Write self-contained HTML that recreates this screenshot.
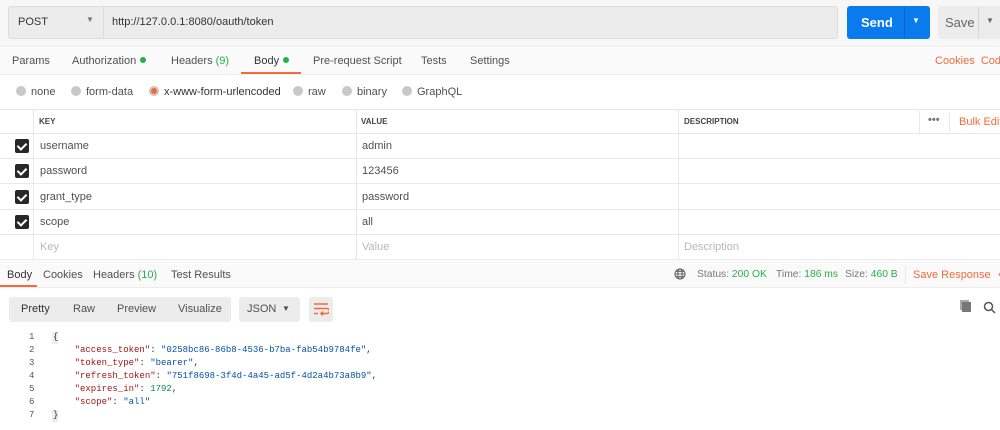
<!DOCTYPE html><html><head><style>
*{box-sizing:border-box;margin:0;padding:0}
body{width:1000px;height:430px;overflow:hidden;background:#fff;font-family:"Liberation Sans",sans-serif;font-size:11px;color:#505050;position:relative}
.a{position:absolute;white-space:nowrap}
.g{color:#26b047}
.o{color:#f26b3a}
.dot{display:inline-block;width:6px;height:6px;border-radius:50%;background:#26b047;margin-left:4px;vertical-align:1px}
.rad{display:inline-block;width:10px;height:10px;border-radius:50%;background:#c8c8c8;vertical-align:-1px;margin-right:5px}
.cb{position:absolute;left:15px;width:14px;height:14px;background:#282828;border-radius:2px}
.cb:after{content:"";position:absolute;left:4px;top:2px;width:4px;height:7px;border:solid #fff;border-width:0 2px 2px 0;transform:rotate(45deg)}
.row{position:absolute;left:0;width:1000px;border-bottom:1px solid #e8e8e8}
.code{font-family:"Liberation Mono",monospace;font-size:9px;line-height:13px;white-space:pre}
.k{color:#a31515}.s{color:#0451a5}.n{color:#098658}
.st{font-size:10.3px;color:#777}
</style></head><body>
<div class="a" style="left:0;top:0;width:1000px;height:47px;background:#f7f7f7;border-bottom:1px solid #ececec"></div>
<div class="a" style="left:8px;top:6px;width:830px;height:33px;background:#ececec;border:1px solid #dcdcdc;border-radius:3px"></div>
<div class="a" style="left:103px;top:7px;width:1px;height:31px;background:#dcdcdc"></div>
<div class="a" style="left:18px;top:16px;font-size:11px;color:#333">POST</div>
<div class="a" style="left:86px;top:15px;font-size:8px;color:#777">▼</div>
<div class="a" style="left:112px;top:16px;color:#333">http://127.0.0.1:8080/oauth/token</div>
<div class="a" style="left:847px;top:6px;width:83px;height:33px;background:#097bed;border-radius:3px"></div>
<div class="a" style="left:904px;top:6px;width:1px;height:33px;background:#0868c9"></div>
<div class="a" style="left:861px;top:15px;color:#fff;font-size:13px;font-weight:bold">Send</div>
<div class="a" style="left:912px;top:16px;color:#fff;font-size:8px">▼</div>
<div class="a" style="left:938px;top:6px;width:70px;height:33px;background:#ececec;border-radius:3px"></div>
<div class="a" style="left:978px;top:6px;width:1px;height:33px;background:#d8d8d8"></div>
<div class="a" style="left:945px;top:15px;color:#666;font-size:13px">Save</div>
<div class="a" style="left:986px;top:16px;color:#666;font-size:8px">▼</div>
<div class="a" style="left:0;top:48px;width:1000px;height:27px;background:#fafafa;border-bottom:1px solid #ececec"></div>
<div class="a" style="top:55px;left:12px">Params</div>
<div class="a" style="top:55px;left:72px">Authorization<span class="dot"></span></div>
<div class="a" style="top:55px;left:171px">Headers <span class="g">(9)</span></div>
<div class="a" style="top:55px;left:254px;color:#333">Body<span class="dot"></span></div>
<div class="a" style="left:241px;top:72px;width:60px;height:2px;background:#f26b3a"></div>
<div class="a" style="top:55px;left:313px">Pre-request Script</div>
<div class="a" style="top:55px;left:421px">Tests</div>
<div class="a" style="top:55px;left:470px">Settings</div>
<div class="a o" style="top:55px;left:935px">Cookies&nbsp;&nbsp;Code</div>
<div class="a" style="top:86px;left:16px"><span class="rad"></span>none</div>
<div class="a" style="top:86px;left:71px"><span class="rad"></span>form-data</div>
<div class="a" style="top:86px;left:149px;color:#333"><span class="rad" style="background:#f26b3a;box-shadow:inset 0 0 0 2px #ccc"></span>x-www-form-urlencoded</div>
<div class="a" style="top:86px;left:293px"><span class="rad"></span>raw</div>
<div class="a" style="top:86px;left:342px"><span class="rad"></span>binary</div>
<div class="a" style="top:86px;left:402px"><span class="rad"></span>GraphQL</div>
<div class="row" style="top:109px;height:1px"></div>
<div class="row" style="top:110px;height:24px"></div>
<div class="row" style="top:134px;height:25px"></div>
<div class="row" style="top:159px;height:25px"></div>
<div class="row" style="top:184px;height:26px"></div>
<div class="row" style="top:210px;height:25px"></div>
<div class="row" style="top:235px;height:25px"></div>
<div class="a" style="left:33px;top:110px;width:1px;height:150px;background:#e8e8e8"></div>
<div class="a" style="left:356px;top:110px;width:1px;height:150px;background:#e8e8e8"></div>
<div class="a" style="left:678px;top:110px;width:1px;height:150px;background:#e8e8e8"></div>
<div class="a" style="left:919px;top:111px;width:1px;height:22px;background:#e8e8e8"></div>
<div class="a" style="left:949px;top:113px;width:1px;height:18px;background:#e8e8e8"></div>
<div class="a" style="top:117px;left:39px;font-size:8px;font-weight:bold;color:#444">KEY</div>
<div class="a" style="top:117px;left:361px;font-size:8px;font-weight:bold;color:#444">VALUE</div>
<div class="a" style="top:117px;left:684px;font-size:8px;font-weight:bold;color:#444">DESCRIPTION</div>
<div class="a" style="top:114px;left:928px;font-weight:bold;color:#777">•••</div>
<div class="a o" style="top:116px;left:959px">Bulk Edit</div>
<div class="cb" style="top:139px"></div><div class="a" style="top:140px;left:40px">username</div><div class="a" style="top:140px;left:362px">admin</div>
<div class="cb" style="top:164px"></div><div class="a" style="top:165px;left:40px">password</div><div class="a" style="top:165px;left:362px">123456</div>
<div class="cb" style="top:190px"></div><div class="a" style="top:191px;left:40px">grant_type</div><div class="a" style="top:191px;left:362px">password</div>
<div class="cb" style="top:215px"></div><div class="a" style="top:216px;left:40px">scope</div><div class="a" style="top:216px;left:362px">all</div>
<div class="a" style="top:241px;left:40px;color:#b8b8b8">Key</div><div class="a" style="top:241px;left:362px;color:#b8b8b8">Value</div><div class="a" style="top:241px;left:684px;color:#b8b8b8">Description</div>
<div class="a" style="left:0;top:261px;width:1000px;height:27px;background:#fafafa;border-bottom:1px solid #ececec"></div>
<div class="a" style="top:269px;left:7px;color:#333">Body</div>
<div class="a" style="left:0;top:285px;width:37px;height:2px;background:#f26b3a"></div>
<div class="a" style="top:269px;left:43px">Cookies</div>
<div class="a" style="top:269px;left:93px">Headers <span class="g">(10)</span></div>
<div class="a" style="top:269px;left:171px">Test Results</div>
<svg class="a" style="left:674px;top:268px" width="12" height="12" viewBox="0 0 12 12" fill="none" stroke="#666" stroke-width="1.1"><circle cx="6" cy="6" r="5"/><ellipse cx="6" cy="6" rx="2.2" ry="5"/><path d="M1 6h10M2 3.3h8M2 8.7h8"/></svg>
<div class="a st" style="top:269px;left:697px">Status: <span class="g">200 OK</span></div>
<div class="a st" style="top:269px;left:776px">Time: <span class="g">186 ms</span></div>
<div class="a st" style="top:269px;left:845px">Size: <span class="g">460 B</span></div>
<div class="a" style="left:905px;top:266px;width:1px;height:18px;background:#e8e8e8"></div>
<div class="a o" style="top:269px;left:913px">Save Response&nbsp;&nbsp;<span style="font-size:8px">▼</span></div>
<div class="a" style="left:9px;top:297px;width:222px;height:25px;background:#ececec;border-radius:3px"></div>
<div class="a" style="top:303px;left:21px;color:#333">Pretty</div>
<div class="a" style="top:303px;left:73px">Raw</div>
<div class="a" style="top:303px;left:117px">Preview</div>
<div class="a" style="top:303px;left:178px">Visualize</div>
<div class="a" style="left:239px;top:297px;width:61px;height:25px;background:#ececec;border-radius:3px"></div>
<div class="a" style="top:303px;left:247px">JSON</div>
<div class="a" style="top:304px;left:282px;font-size:8px">▼</div>
<div class="a" style="left:309px;top:297px;width:24px;height:25px;background:#ececec;border-radius:3px"></div>
<svg class="a" style="left:313px;top:302px" width="16" height="14" viewBox="0 0 16 14" fill="none" stroke="#f26b3a" stroke-width="1.5"><path d="M1 2h14M1 6.5h13a2.5 2.5 0 0 1 0 5H8M10 9.5l-2 2 2 2M1 11.5h4"/></svg>
<div class="a" style="left:962px;top:302px;width:9px;height:10px;background:#777;box-shadow:-2px -2px 0 0 #aaa"></div>
<svg class="a" style="left:983px;top:301px" width="13" height="13" viewBox="0 0 13 13" fill="none" stroke="#555" stroke-width="1.5"><circle cx="5.5" cy="5.5" r="4"/><path d="M8.5 8.5l3.5 3.5"/></svg>
<div class="a code" style="left:29px;top:331px;color:#555;text-align:right">1
2
3
4
5
6
7</div>
<div class="a" style="left:52px;top:332px;width:6px;height:12px;background:#eee"></div>
<div class="a" style="left:52px;top:410px;width:6px;height:12px;background:#eee"></div>
<div class="a code" style="left:53px;top:331px;color:#333">{
    <span class="k">"access_token"</span>: <span class="s">"0258bc86-86b8-4536-b7ba-fab54b9784fe"</span>,
    <span class="k">"token_type"</span>: <span class="s">"bearer"</span>,
    <span class="k">"refresh_token"</span>: <span class="s">"751f8698-3f4d-4a45-ad5f-4d2a4b73a8b9"</span>,
    <span class="k">"expires_in"</span>: <span class="n">1792</span>,
    <span class="k">"scope"</span>: <span class="s">"all"</span>
}</div>
</body></html>
